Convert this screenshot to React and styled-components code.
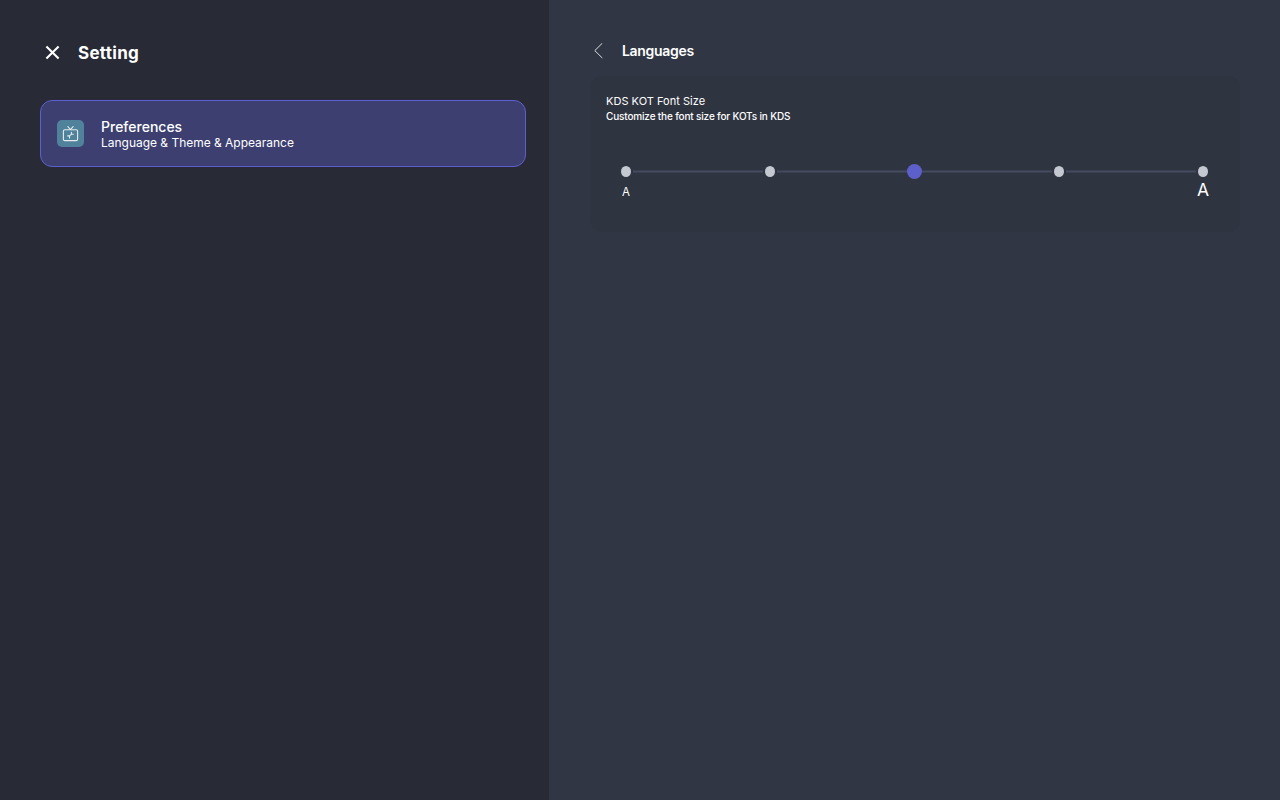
import React from 'react';
import styled, { createGlobalStyle } from 'styled-components';


const SIZES = ['xs', 'sm', 'md', 'lg', 'xl'];

const App = () => {

  const selected = 'md';

  return (
    <MainContainer>
      <GlobalStyle />
      <Sidebar>
        <SidebarHeader>
          <CloseIcon viewBox="0 0 15 15">
            <path d="M1.4 1.4L13.6 13.6M13.6 1.4L1.4 13.6" />
          </CloseIcon>
          <Title>Setting</Title>
        </SidebarHeader>

        <MenuItem>
          <MenuBadge>
            <MenuIcon viewBox="0 0 17 17">
              <rect x="1.4" y="4.8" width="14.2" height="10.8" rx="1.4" />
              <path d="M5.9 1.6L8.5 4.5L11.1 1.6" />
              <path d="M5.7 10.9H7.5V13M7.5 10.9L9.4 9.3M9.4 7.4V9.3H11.3" />
            </MenuIcon>
          </MenuBadge>
          <div>
            <MenuTitle>Preferences</MenuTitle>
            <MenuText>Language &amp; Theme &amp; Appearance</MenuText>
          </div>
        </MenuItem>
      </Sidebar>

      <Content>
        <ContentHeader>
          <BackIcon viewBox="0 0 9 16">
            <path d="M8.3 0.2L0.8 7.6L8.3 15" />
          </BackIcon>
          <ContentTitle>Languages</ContentTitle>
        </ContentHeader>

        <Card>
          <CardTitle>KDS KOT Font Size</CardTitle>
          <CardText>Customize the font size for KOTs in KDS</CardText>

          <Slider>
            {SIZES.map((size, index) => (
              <React.Fragment key={size}>
                {index > 0 ? <Line /> : null}
                <Stop>
                  <Dot $active={size === selected} />
                </Stop>
              </React.Fragment>
            ))}
          </Slider>
          <Labels>
            <Label $size="11.5px" $line="26px">A</Label>
            <Label $size="17.5px" $line="22px">A</Label>
          </Labels>
        </Card>
      </Content>
    </MainContainer>
  )
}

const GlobalStyle = createGlobalStyle`
  * {
    box-sizing: border-box;
  }

  body {
    margin: 0;
    color: #FFF;
    font-family: Inter, "Liberation Sans", sans-serif;
  }
`;

const MainContainer = styled.div`
  display: flex;
  height: 100vh;
  overflow: hidden;
`;

const Sidebar = styled.div`
  width: 549px;
  padding: 40px 23px 0 40px;
  background-color: #282A35;
`;

const SidebarHeader = styled.div`
  display: flex;
  align-items: center;
  height: 26px;
  padding-left: 5px;
  margin-bottom: 34px;
`;

const CloseIcon = styled.svg`
  width: 15px;
  height: 15px;
  margin: 0 18px 1px 0;
  fill: none;
  stroke: #FFF;
  stroke-width: 2.1;
`;

const Title = styled.h1`
  margin: 0;
  font-size: 17px;
  line-height: 26px;
  font-weight: 700;
  letter-spacing: 0.3px;
`;

const MenuItem = styled.div`
  display: flex;
  align-items: center;
  height: 67px;
  padding: 0 16px;
  border: 1px solid #5D5FCF;
  border-radius: 12px;
  background-color: #3C3F6F;
`;

const MenuBadge = styled.div`
  display: flex;
  align-items: center;
  justify-content: center;
  width: 27px;
  height: 27px;
  margin-right: 17px;
  border-radius: 5px;
  background-color: #50829B;
`;

const MenuIcon = styled.svg`
  width: 17px;
  height: 17px;
  fill: none;
  stroke: #E4ECF0;
  stroke-width: 1.1;
  stroke-linecap: round;
  stroke-linejoin: round;
`;

const MenuTitle = styled.div`
  font-size: 14px;
  line-height: 16px;
  font-weight: 500;
  margin-top: 2px;
`;

const MenuText = styled.div`
  font-size: 12px;
  line-height: 16px;
  letter-spacing: -0.02px;
`;

const Content = styled.div`
  flex: 1;
  padding: 38px 40px 0 41px;
  background-color: #303643;
`;

const ContentHeader = styled.div`
  display: flex;
  align-items: center;
  height: 26px;
  padding-left: 4px;
  margin-bottom: 12px;
`;

const BackIcon = styled.svg`
  width: 9px;
  height: 16px;
  margin-right: 19px;
  fill: none;
  stroke: #DCDFE4;
  stroke-width: 1;
`;

const ContentTitle = styled.h2`
  margin: 0;
  font-size: 14px;
  line-height: 26px;
  font-weight: 600;
  letter-spacing: -0.3px;
`;

const Card = styled.div`
  height: 156px;
  padding: 17px 16px;
  border-radius: 12px;
  background-color: #2F3441;
`;

const CardTitle = styled.div`
  font-size: 11px;
  line-height: 16px;
  font-weight: 400;
  letter-spacing: 0.03px;
`;

const CardText = styled.div`
  font-size: 10px;
  line-height: 15px;
  font-weight: 500;
  letter-spacing: -0.16px;
`;

const Slider = styled.div`
  display: flex;
  align-items: center;
  height: 15px;
  margin: 40px 14px 0 13px;
`;

const Stop = styled.div`
  display: flex;
  align-items: center;
  justify-content: center;
  width: 14px;
  height: 15px;
`;

const Dot = styled.div`
  flex-shrink: 0;
  width: ${props => props.$active ? '15px' : '10px'};
  height: ${props => props.$active ? '15px' : '11px'};
  border-radius: 50%;
  background-color: ${props => props.$active ? '#5D5FCA' : '#C4C8D1'};
`;

const Line = styled.div`
  flex: 1;
  height: 3px;
  border: solid #3A4051;
  border-width: 1px 0;
  background-color: #454C60;
`;

const Labels = styled.div`
  display: flex;
  align-items: flex-start;
  justify-content: space-between;
  height: 24px;
`;

const Label = styled.div`
  display: flex;
  justify-content: center;
  width: 14px;
  margin: 0 14px 0 13px;
  font-size: ${props => props.$size};
  line-height: ${props => props.$line};
`;

export default App;
